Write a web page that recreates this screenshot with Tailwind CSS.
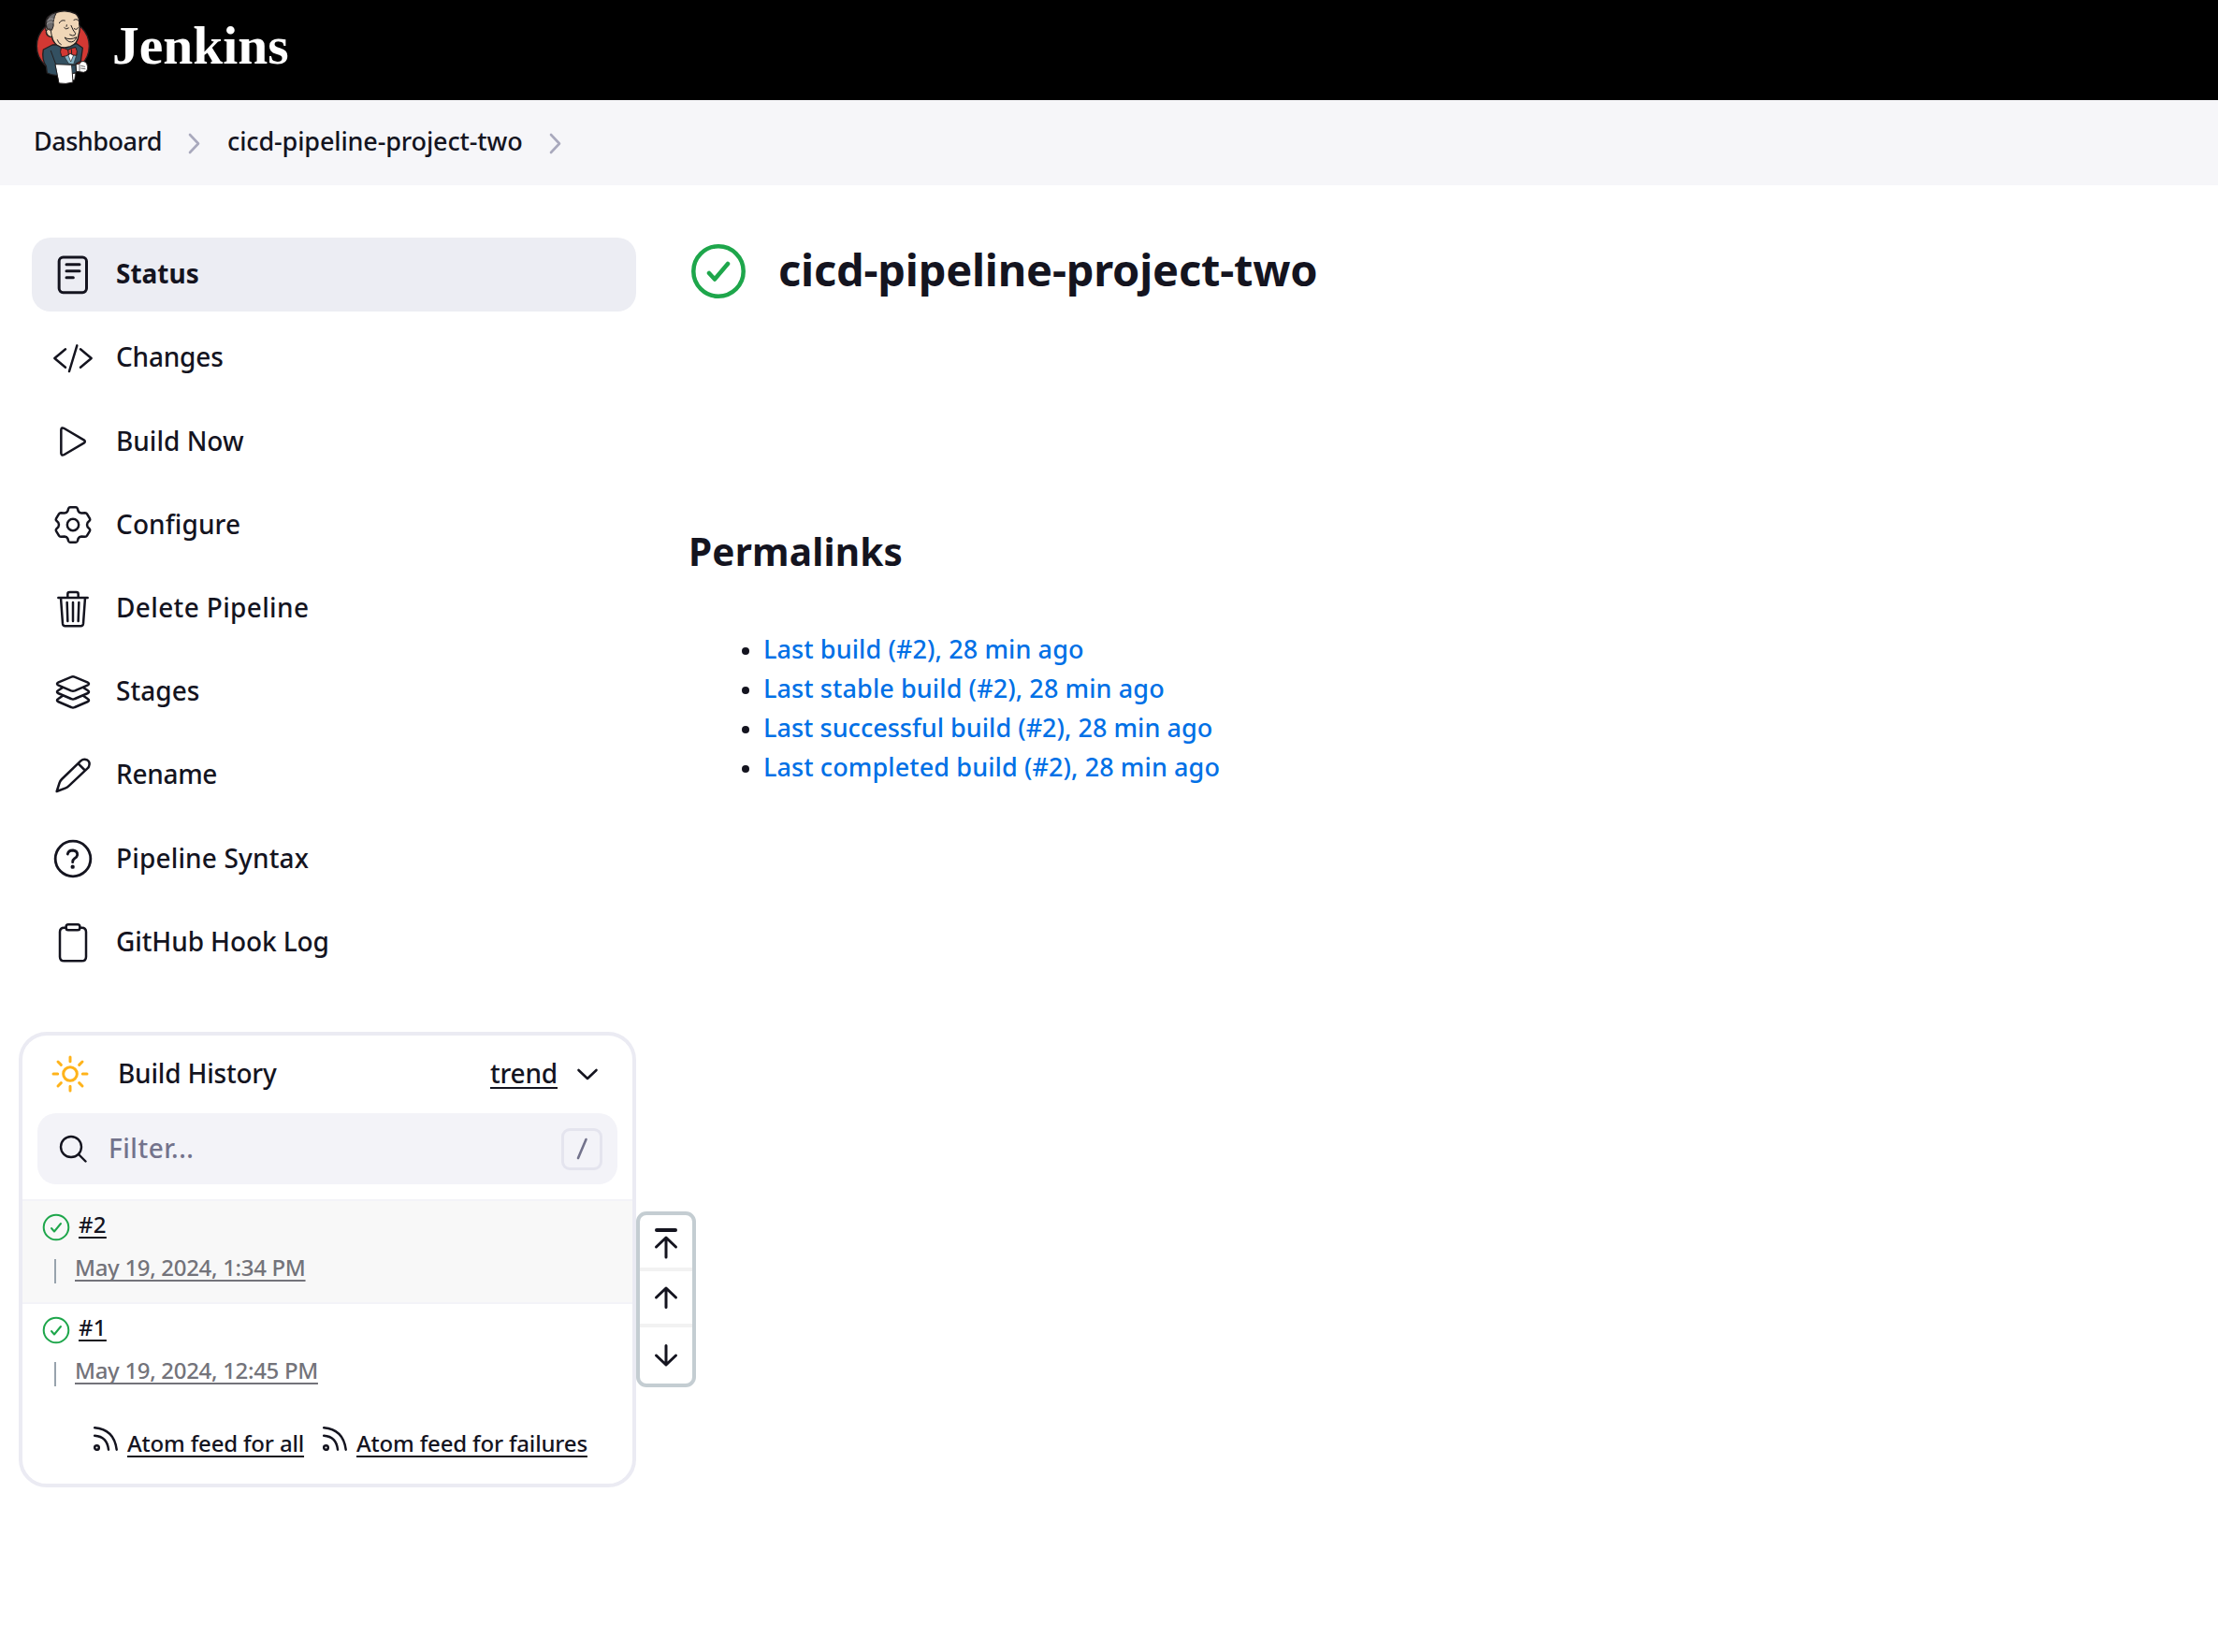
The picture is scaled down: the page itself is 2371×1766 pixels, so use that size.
<!DOCTYPE html>
<html lang="en">
<head>
<meta charset="utf-8">
<title>cicd-pipeline-project-two [Jenkins]</title>
<script src="https://cdn.jsdelivr.net/npm/@tailwindcss/browser@4"></script>
</head>
<body class="min-h-screen overflow-hidden bg-white font-['Noto_Sans',sans-serif] text-[28px] leading-[42px] font-medium whitespace-nowrap text-[#14141f]">

<header class="flex h-[107px] items-start bg-black">
  <svg class="mt-[9px] ml-[36px] h-[83px] w-[64px]" viewBox="48 27 192 249" fill="none" stroke="#231f20" stroke-linejoin="round" stroke-linecap="round">
    <circle cx="142" cy="148" r="84" fill="#d33833" stroke-width="4"/>
    <path d="M108 144L79 159Q73 190 88 212L91 234Q105 240 124 242L176 238L184 228V204L199 196L205 154L186 140Z" fill="#335061" stroke-width="4"/>
    <path d="M101 104Q82 100 88 86Q80 52 118 41Q150 28 182 44Q196 54 194 76Q198 94 192 112Q190 140 166 149Q140 158 122 144Q108 132 107 118Q90 118 88 104Q88 94 101 96Z" fill="#f0d6b7" stroke-width="4"/>
    <path d="M121 40Q88 48 88 80L92 94Q100 90 106 97Q114 84 111 70Q114 52 121 40Z" fill="#6d6b6d" stroke-width="3"/>
    <path d="M91 67Q100 55 112 62M91 76Q104 66 112 74" stroke="#b5b3b4" stroke-width="2"/>
    <path d="M88 98Q96 90 103 98Q104 108 107 118Q90 118 88 98Z" fill="#f0d6b7" stroke-width="3"/>
    <path d="M130 74Q136 62 148 66M177 64Q188 58 193 68" stroke-width="3"/>
    <path d="M146 89Q151 97 160 90M153 85L154 80M178 92Q187 98 190 89M168 82Q174 98 182 107Q182 116 172 114L164 111M148 121Q164 130 186 119Q178 138 162 134Q152 130 148 121ZM124 128Q126 138 136 143" stroke-width="3"/>
    <path d="M143 176L160 204L176 206L187 172L164 166Z" fill="#81b0c4" stroke-width="2"/>
    <path d="M157 172L167 198L178 172Z" fill="#fff" stroke-width="2"/>
    <path d="M136 153Q150 155 158 160Q170 152 183 152Q190 164 185 178Q172 178 166 172Q152 182 138 182Q130 166 136 153ZM158 160L160 175M169 158L170 173" fill="#d33833" stroke-width="3"/>
    <path d="M103 163L118 204" stroke-width="3"/>
    <path d="M168 232L182 236L179 256L170 258Z" fill="#fff" stroke-width="2"/>
    <path d="M118 206L170 208L174 264Q150 271 130 267Z" fill="#fff" stroke-width="3"/>
    <path d="M170 210L184 207V232L173 236" fill="#335061" stroke-width="3"/>
    <path d="M184 207L195 204Q200 194 210 197Q220 200 221 214Q222 230 208 232L186 229Z" fill="#fff" stroke-width="3"/>
    <path d="M195 206V228M200 211L212 214M200 219L213 221" stroke-width="2"/>
  </svg>
  <span class="mt-[19px] ml-[20px] font-['Liberation_Serif',serif] text-[57.5px] leading-[60px] font-bold text-white">Jenkins</span>
</header>

<nav class="flex h-[91px] items-center bg-[#f6f6f9] pl-[36px] text-[27px]">
  <a class="pb-1 tracking-[-0.5px]">Dashboard</a>
  <svg class="ml-[26px] h-[24px] w-[16px]" viewBox="0 0 16 24" fill="none" stroke="#a9a9bd" stroke-width="2.600" stroke-linecap="round" stroke-linejoin="round"><path d="M4 3L13 12.5L4 22"/></svg>
  <a class="ml-[28px] pb-1 tracking-[-0.14px]">cicd-pipeline-project-two</a>
  <svg class="ml-[26px] h-[24px] w-[16px]" viewBox="0 0 16 24" fill="none" stroke="#a9a9bd" stroke-width="2.600" stroke-linecap="round" stroke-linejoin="round"><path d="M4 3L13 12.5L4 22"/></svg>
</nav>

<div class="relative flex">
  <aside class="w-[680px] shrink-0 pt-[56px]">
    <div class="ml-[34px] flex flex-col gap-[10.25px]">
      <a class="flex h-[79px] items-center gap-[24px] rounded-[20px] bg-[#ecedf3] pl-[22px] font-bold">
        <svg class="size-[44px]" viewBox="66 66 132 132" fill="none" stroke="#14141f" stroke-width="9" stroke-linecap="round" stroke-linejoin="round"><rect x="87.500" y="75" width="88" height="113" rx="13"/><path d="M111 98H153M111 119H153M111 140H133"/></svg>
        <span class="pb-[3px]">Status</span>
      </a>
      <a class="flex h-[79px] items-center gap-[24px] pl-[22px]">
        <svg class="size-[44px]" viewBox="108 63 132 132" fill="none" stroke="#14141f" stroke-width="7.500" stroke-linecap="round" stroke-linejoin="round"><path d="M150 100L115 129L150 158M198 100L233 129L198 158M187 88L162 171"/></svg>
        <span class="pb-[3px] tracking-[-0.2px]">Changes</span>
      </a>
      <a class="flex h-[79px] items-center gap-[24px] pl-[22px]">
        <svg class="size-[44px]" viewBox="108 330 132 132" fill="none" stroke="#14141f" stroke-width="7.500" stroke-linecap="round" stroke-linejoin="round"><path d="M136 358V434Q137 443 146 438L209 401Q216 396 209 391L146 354Q137 349 136 358Z"/></svg>
        <span class="pb-[3px]">Build Now</span>
      </a>
      <a class="flex h-[79px] items-center gap-[24px] pl-[22px]">
        <svg class="size-[44px]" viewBox="108 597 132 132" fill="none" stroke="#14141f" stroke-width="7.500" stroke-linecap="round" stroke-linejoin="round"><circle cx="174" cy="663" r="18.500"/><path d="M165 607H183Q187 607 188.500 611L191 619Q194 625 201 625.500L213 624.500Q217 624.500 219 628L228 643Q230 647 227 650L221 656Q217 663 221 670L227 676Q230 679 228 683L219 698Q217 701.500 213 701.500L201 700.500Q194 701 191 707L188.500 715Q187 719 183 719H165Q161 719 159.500 715L157 707Q154 701 147 700.500L135 701.500Q131 701.500 129 698L120 683Q118 679 121 676L127 670Q131 663 127 656L121 650Q118 647 120 643L129 628Q131 624.500 135 624.500L147 625.500Q154 625 157 619L159.500 611Q161 607 165 607Z"/></svg>
        <span class="pb-[3px] tracking-[0.1px]">Configure</span>
      </a>
      <a class="flex h-[79px] items-center gap-[24px] pl-[22px]">
        <svg class="size-[44px]" viewBox="108 866 132 132" fill="none" stroke="#14141f" stroke-width="7.500" stroke-linecap="round" stroke-linejoin="round"><path d="M127 896H221M135 896L141 979Q142 987 149 987H199Q206 987 207 979L213 896M157 895V884Q157 878 163 878H185Q191 878 191 884V895M155 911L157 971M174 911V971M193 911L191 971"/></svg>
        <span class="pb-[3px] tracking-[0.35px]">Delete Pipeline</span>
      </a>
      <a class="flex h-[79px] items-center gap-[24px] pl-[22px]">
        <svg class="size-[44px]" viewBox="108 84 132 132" fill="none" stroke="#14141f" stroke-width="7.500" stroke-linecap="round" stroke-linejoin="round"><path d="M169 101Q174 98 179 101L222 119Q228 123 222 127L180 145Q174 147 168 145L126 127Q120 123 126 119ZM141 135L126 145Q120 149 126 153L168 171Q174 174 180 171L222 153Q228 149 222 145L207 135M141 161L126 172Q120 176 126 180L168 198Q174 201 180 198L222 180Q228 176 222 172L207 161"/></svg>
        <span class="pb-[3px] tracking-[0.05px]">Stages</span>
      </a>
      <a class="flex h-[79px] items-center gap-[24px] pl-[22px]">
        <svg class="size-[44px]" viewBox="108 351 132 132" fill="none" stroke="#14141f" stroke-width="7.500" stroke-linecap="round" stroke-linejoin="round"><path d="M122 468L131 440Q133 434 138 429L199 370Q208 362 219 367Q231 375 225 388L223 392L160 451Q155 456 149 458ZM191 379L211 399"/></svg>
        <span class="pb-[4px] tracking-[-0.3px]">Rename</span>
      </a>
      <a class="flex h-[79px] items-center gap-[24px] pl-[22px]">
        <svg class="size-[44px]" viewBox="108 618 132 132" fill="none" stroke="#14141f" stroke-width="8.500" stroke-linecap="round" stroke-linejoin="round"><circle cx="174" cy="684" r="56.500"/><path d="M157 669Q159 657 174 657Q189 659 188 672Q187 679 179 683Q173 687 173 695"/><circle cx="173" cy="710" r="6.500" fill="#14141f" stroke="none"/></svg>
        <span class="pb-[3px] tracking-[0.15px]">Pipeline Syntax</span>
      </a>
      <a class="flex h-[79px] items-center gap-[24px] pl-[22px]">
        <svg class="size-[44px]" viewBox="108 885 132 132" fill="none" stroke="#14141f" stroke-width="7.500" stroke-linecap="round" stroke-linejoin="round"><path d="M151 902H146Q132 902 132 916V995Q132 1009 146 1009H202Q216 1009 216 995V916Q216 902 202 902H197"/><rect x="152" y="892" width="44" height="18" rx="7"/></svg>
        <span class="pb-[3px] tracking-[-0.1px]">GitHub Hook Log</span>
      </a>
    </div>

    <section class="mt-[56px] ml-[20px] h-[487px] overflow-hidden rounded-[30px] border-4 border-[#ebebf3]">
      <div class="flex h-[82px] items-center pl-[30px]">
        <svg class="size-[42px]" viewBox="162 111 126 126" fill="none" stroke="#ffb31a" stroke-width="9" stroke-linecap="round"><circle cx="225" cy="174" r="22"/><path d="M225 120V134M225 214V228M171 174H185M265 174H279M186 135L196 145M254 203L264 213M264 135L254 145M196 203L186 213"/></svg>
        <span class="ml-[30px] w-[398px] pb-[2px] tracking-[-0.2px]">Build History</span>
        <a class="w-[72px] pb-[2px] tracking-[-0.2px] underline decoration-2 underline-offset-4">trend</a>
        <svg class="ml-[20px] h-[16px] w-[24px]" viewBox="0 0 24 16" fill="none" stroke="#14141f" stroke-width="2.600" stroke-linecap="round" stroke-linejoin="round"><path d="M2.500 4L12 13L21.500 4"/></svg>
      </div>
      <div class="mx-4 mt-px flex h-[76px] items-center rounded-[20px] bg-[#f3f3f8] pr-4 pl-[23px]">
        <svg class="size-[30px]" viewBox="0 0 30 30" fill="none" stroke="#14141f" stroke-width="2.400" stroke-linecap="round"><circle cx="13" cy="13" r="11"/><path d="M21 21L28.500 28.500"/></svg>
        <span class="ml-[23px] grow pb-[3px] tracking-[0.5px] text-[#73738c]">Filter...</span>
        <span class="flex h-[45px] w-[44px] items-center justify-center rounded-[9px] border-3 border-[#e4e4ee]">
          <svg class="h-[24px] w-[14px]" viewBox="0 0 14 24" fill="none" stroke="#73738c" stroke-width="2.600" stroke-linecap="round"><path d="M11.500 2L3 22"/></svg>
        </span>
      </div>

      <div class="mt-4 h-[112px] border-y-2 border-[#f3f3f8] bg-[#f8f8f8] text-[24px]">
        <div class="flex h-[56px] items-center pl-[21px]">
          <svg class="size-[30px]" viewBox="0 0 30 30" fill="none" stroke="#1ea64b" stroke-width="2" stroke-linecap="round" stroke-linejoin="round"><circle cx="15" cy="15" r="13.300"/><path d="M10 16L13 19.500L20 11"/></svg>
          <a class="ml-[9px] pb-[7px] tracking-[0.3px] underline decoration-2 underline-offset-4 [text-decoration-skip-ink:none]">#2</a>
        </div>
        <div class="flex h-[38px] items-center pl-[34px] text-[#73737a]">
          <i class="h-[26px] w-[2px] bg-[#98a3ad]"></i>
          <a class="ml-[20px] pb-[9px] tracking-[-0.32px] underline decoration-2 underline-offset-4 [text-decoration-skip-ink:none]">May 19, 2024, 1:34 PM</a>
        </div>
      </div>
      <div class="h-[108px] text-[24px]">
        <div class="flex h-[56px] items-center pl-[21px]">
          <svg class="size-[30px]" viewBox="0 0 30 30" fill="none" stroke="#1ea64b" stroke-width="2" stroke-linecap="round" stroke-linejoin="round"><circle cx="15" cy="15" r="13.300"/><path d="M10 16L13 19.500L20 11"/></svg>
          <a class="ml-[9px] pb-[7px] tracking-[0.3px] underline decoration-2 underline-offset-4 [text-decoration-skip-ink:none]">#1</a>
        </div>
        <div class="flex h-[38px] items-center pl-[34px] text-[#73737a]">
          <i class="h-[26px] w-[2px] bg-[#98a3ad]"></i>
          <a class="ml-[20px] pb-[9px] tracking-[-0.32px] underline decoration-2 underline-offset-4 [text-decoration-skip-ink:none]">May 19, 2024, 12:45 PM</a>
        </div>
      </div>
      <div class="flex h-[72px] items-center pl-[76px] text-[24px]">
        <svg class="size-[26px]" viewBox="0 0 26 26" fill="none" stroke="#14141f" stroke-width="2.500" stroke-linecap="round"><circle cx="3.500" cy="22.500" r="2.300"/><path d="M1.200 1.300Q22 3 24.700 24.700M1.200 9.700Q14.500 10.500 16 24.700"/></svg>
        <a class="ml-[10px] pt-[9px] tracking-[-0.18px] underline decoration-2 underline-offset-4 [text-decoration-skip-ink:none]">Atom feed for all</a>
        <svg class="ml-[20px] size-[26px]" viewBox="0 0 26 26" fill="none" stroke="#14141f" stroke-width="2.500" stroke-linecap="round"><circle cx="3.500" cy="22.500" r="2.300"/><path d="M1.200 1.300Q22 3 24.700 24.700M1.200 9.700Q14.500 10.500 16 24.700"/></svg>
        <a class="ml-[10px] pt-[9px] tracking-[-0.18px] underline decoration-2 underline-offset-4 [text-decoration-skip-ink:none]">Atom feed for failures</a>
      </div>
    </section>
  </aside>

  <!-- floating build-history pager -->
  <div class="absolute top-[1097px] left-[680px] flex h-[188px] w-[64px] flex-col rounded-[11px] border-4 border-[#c4cdd2] bg-white">
    <button class="flex h-[60px] justify-center border-b-4 border-[#f2f2f2]">
      <svg class="h-[56px] w-[32px]" viewBox="0 0 32 56" fill="none" stroke="#14141f" stroke-width="3" stroke-linecap="round" stroke-linejoin="round"><path d="M6 16H26" stroke-width="4"/><path d="M16 45V24M5.500 34L16 24L26.500 34"/></svg>
    </button>
    <button class="flex h-[60px] justify-center border-b-4 border-[#f2f2f2]">
      <svg class="h-[56px] w-[32px]" viewBox="0 0 32 56" fill="none" stroke="#14141f" stroke-width="3" stroke-linecap="round" stroke-linejoin="round"><path d="M16 38.500V18M5.500 28L16 18L26.500 28"/></svg>
    </button>
    <button class="flex h-[60px] justify-center">
      <svg class="h-[60px] w-[32px]" viewBox="0 0 32 60" fill="none" stroke="#14141f" stroke-width="3" stroke-linecap="round" stroke-linejoin="round"><path d="M16 19.500V40M5.500 30L16 40L26.500 30"/></svg>
    </button>
  </div>

  <main class="pt-[56px] pl-[56px]">
    <div class="flex h-[72px] items-center pl-[2px]">
      <svg class="size-[60px]" viewBox="0 0 60 60" fill="none" stroke="#1ea64b" stroke-width="4.500" stroke-linecap="round" stroke-linejoin="round"><circle cx="30" cy="30" r="26.700"/><path d="M20 32L26 38.500L40 22"/></svg>
      <h1 class="ml-[34px] pb-[4px] text-[47px] leading-[60px] font-bold tracking-[-0.2px]">cicd-pipeline-project-two</h1>
    </div>
    <h2 class="mt-[234px] text-[40.5px] leading-[60px] font-bold tracking-[0.2px]">Permalinks</h2>
    <ul class="mt-[53px] ml-[57px] text-[27px] tracking-[0.1px] text-[#0070e6]">
      <li class="flex items-center gap-[15px]"><i class="mt-[3px] size-[8px] rounded-full bg-[#14141f]"></i><a>Last build (#2), 28 min ago</a></li>
      <li class="flex items-center gap-[15px]"><i class="mt-[3px] size-[8px] rounded-full bg-[#14141f]"></i><a>Last stable build (#2), 28 min ago</a></li>
      <li class="flex items-center gap-[15px] tracking-[0.03px]"><i class="mt-[3px] size-[8px] rounded-full bg-[#14141f]"></i><a>Last successful build (#2), 28 min ago</a></li>
      <li class="flex items-center gap-[15px]"><i class="mt-[3px] size-[8px] rounded-full bg-[#14141f]"></i><a>Last completed build (#2), 28 min ago</a></li>
    </ul>
  </main>
</div>
</body>
</html>
